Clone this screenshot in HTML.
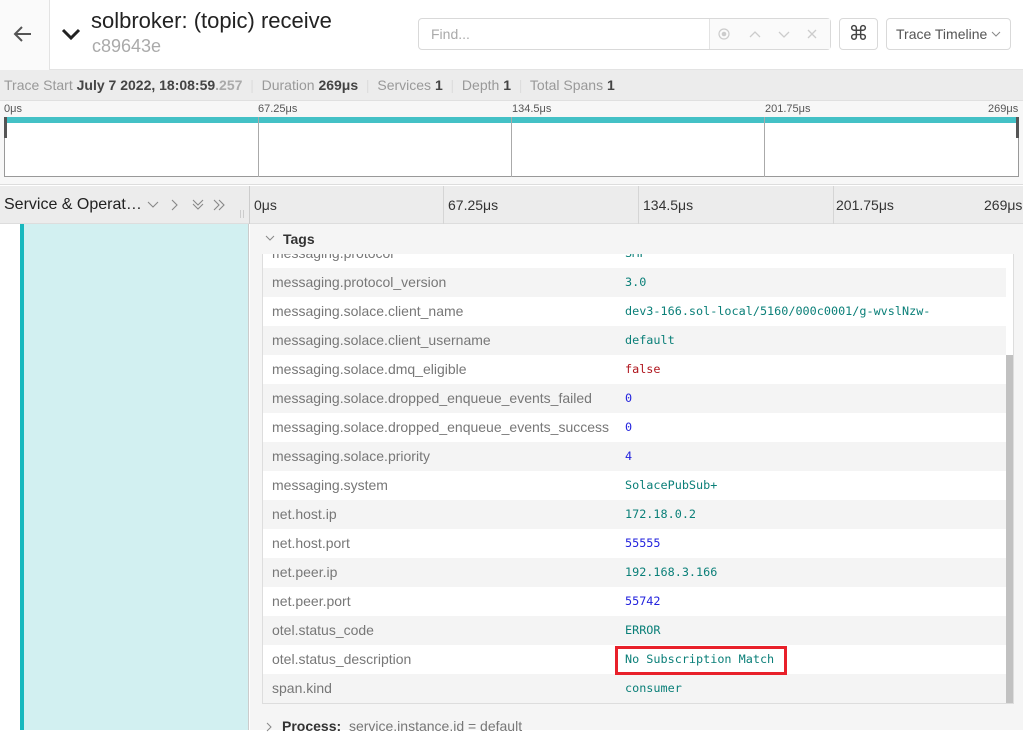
<!DOCTYPE html>
<html><head><meta charset="utf-8"><style>
*{box-sizing:border-box;margin:0;padding:0}
body{width:1023px;height:730px;overflow:hidden;background:#fff;font-family:"Liberation Sans",Arial,sans-serif;position:relative}
.a{position:absolute}
.mono{font-family:"DejaVu Sans Mono","Liberation Mono",monospace;font-size:11.8px}
.k{position:absolute;left:9px;font-size:14px;color:#777}
.v{position:absolute;left:362px}
.row{position:absolute;left:0;width:743px;height:29px;line-height:29px}
.g{background:#f4f4f4}.w{background:#fff}
.t{color:#0a7f78}.n{color:#2222dd}.r{color:#b0171f}
</style></head><body>
<!-- header -->
<div class="a" style="left:0;top:0;width:1023px;height:70px;border-bottom:1px solid #e3e3e3"></div>
<div class="a" style="left:0;top:0;width:50px;height:70px;border-right:1px solid #e3e3e3;background:#fafafa"></div>
<svg class="a" style="left:13px;top:25px" width="20" height="18" viewBox="0 0 20 18"><path d="M9 2L2 9l7 7M2 9h16" stroke="#555" stroke-width="2" fill="none"/></svg>
<svg class="a" style="left:61px;top:27px" width="20" height="14" viewBox="0 0 20 14"><path d="M2 3l8 8 8-8" stroke="#222" stroke-width="3" fill="none"/></svg>
<div class="a" style="left:91px;top:8px;font-size:22px;color:#222">solbroker: (topic) receive</div>
<div class="a" style="left:92px;top:36px;font-size:18px;color:#aaa">c89643e</div>
<div class="a" style="left:418px;top:18px;width:413px;height:32px;border:1px solid #d9d9d9;border-radius:4px"></div>
<div class="a" style="left:709px;top:19px;width:121px;height:30px;background:#fafafa;border-left:1px solid #e3e3e3"></div>
<div class="a" style="left:431px;top:26px;font-size:14px;color:#aaa">Find...</div>
<svg class="a" style="left:716px;top:26px" width="110" height="16" viewBox="0 0 110 16"><circle cx="8" cy="8" r="5" stroke="#ccc" fill="none" stroke-width="1.2"/><circle cx="8" cy="8" r="2.3" fill="#ccc"/><path d="M34 11l5-5 5 5M63 6l5 5 5-5M92 4l8 8M100 4l-8 8" stroke="#ccc" stroke-width="1.3" fill="none"/></svg>
<div class="a" style="left:839px;top:18px;width:39px;height:32px;border:1px solid #d9d9d9;border-radius:4px;text-align:center;line-height:30px;font-size:20px;color:#444">⌘</div>
<div class="a" style="left:886px;top:18px;width:125px;height:32px;border:1px solid #d9d9d9;border-radius:4px;line-height:30px;padding-left:9px;font-size:14px;color:#555">Trace Timeline</div>
<svg class="a" style="left:991px;top:31px" width="10" height="6" viewBox="0 0 10 6"><path d="M1 1l4 4 4-4" stroke="#888" fill="none"/></svg>
<!-- summary -->
<div class="a" style="left:0;top:70px;width:1023px;height:31px;background:#ececec;border-bottom:1px solid #e0e0e0;font-size:14px;color:#999;line-height:31px;padding-left:4px;white-space:nowrap">Trace Start <b style="color:#444">July 7 2022, 18:08:59</b><b style="color:#aaa">.257</b> <span style="color:#ddd">&nbsp;|&nbsp;</span> Duration <b style="color:#444">269μs</b> <span style="color:#ddd">&nbsp;|&nbsp;</span> Services <b style="color:#444">1</b> <span style="color:#ddd">&nbsp;|&nbsp;</span> Depth <b style="color:#444">1</b> <span style="color:#ddd">&nbsp;|&nbsp;</span> Total Spans <b style="color:#444">1</b></div>
<!-- minimap -->
<div class="a" style="left:0;top:101px;width:1023px;height:84px;background:#f7f7f7;border-bottom:1px solid #ddd"></div>
<div class="a" style="left:4px;top:103px;font-size:11px;color:#555">0μs</div>
<div class="a" style="left:258px;top:103px;font-size:11px;color:#555">67.25μs</div>
<div class="a" style="left:512px;top:103px;font-size:11px;color:#555">134.5μs</div>
<div class="a" style="left:765px;top:103px;font-size:11px;color:#555">201.75μs</div>
<div class="a" style="left:988px;top:103px;font-size:11px;color:#555">269μs</div>
<div class="a" style="left:4px;top:117px;width:1015px;height:60px;background:#fff;border:1px solid #999;border-top:none"></div>
<div class="a" style="left:4px;top:117px;width:1015px;height:6px;background:#44c1c6"></div>
<div class="a" style="left:258px;top:117px;width:1px;height:60px;background:#aaa"></div>
<div class="a" style="left:511px;top:117px;width:1px;height:60px;background:#aaa"></div>
<div class="a" style="left:764px;top:117px;width:1px;height:60px;background:#aaa"></div>
<div class="a" style="left:4px;top:117px;width:3px;height:21px;background:#555"></div>
<div class="a" style="left:1016px;top:117px;width:3px;height:21px;background:#555"></div>
<!-- column header -->
<div class="a" style="left:0;top:186px;width:1023px;height:38px;background:#ececec;border-bottom:1px solid #ddd"></div>
<div class="a" style="left:4px;top:196px;font-size:16px;color:#222">Service &amp; Operat…</div>
<svg class="a" style="left:146px;top:198px" width="85" height="14" viewBox="0 0 85 14"><path d="M2 4l5 5 5-5M26 2l5 5-5 5M47 2l5 5 5-5M47 6l5 5 5-5M68 2l5 5-5 5M73 2l5 5-5 5" stroke="#888" stroke-width="1.1" fill="none"/></svg>
<div class="a" style="left:240px;top:210px;width:4px;height:8px;border-left:1px solid #ccc;border-right:1px solid #ccc"></div>
<div class="a" style="left:249px;top:186px;width:1px;height:38px;background:#ccc"></div>
<div class="a" style="left:443px;top:186px;width:1px;height:38px;background:#d5d5d5"></div>
<div class="a" style="left:638px;top:186px;width:1px;height:38px;background:#d5d5d5"></div>
<div class="a" style="left:833px;top:186px;width:1px;height:38px;background:#d5d5d5"></div>
<div class="a" style="left:254px;top:197px;font-size:14px;color:#333">0μs</div>
<div class="a" style="left:448px;top:197px;font-size:14px;color:#333">67.25μs</div>
<div class="a" style="left:643px;top:197px;font-size:14px;color:#333">134.5μs</div>
<div class="a" style="left:836px;top:197px;font-size:14px;color:#333">201.75μs</div>
<div class="a" style="left:984px;top:197px;font-size:14px;color:#333">269μs</div>
<!-- left panel -->
<div class="a" style="left:20px;top:224px;width:4px;height:506px;background:#17b8be"></div>
<div class="a" style="left:24px;top:224px;width:225px;height:506px;background:#d2f0f1;border-right:1px solid #ccc"></div>
<!-- detail -->
<div class="a" style="left:250px;top:224px;width:773px;height:506px;background:#f5f5f5"></div>
<svg class="a" style="left:265px;top:235px" width="10" height="6" viewBox="0 0 10 6"><path d="M1 1l4 4 4-4" stroke="#888" fill="none"/></svg>
<div class="a" style="left:283px;top:231px;font-size:14px;color:#333"><b>Tags</b></div>
<div class="a" style="left:262px;top:254px;width:752px;height:450px;border:1px solid #ddd;border-top:none;overflow:hidden;background:#fff">
<div class="row w" style="top:-15px"><span class="k">messaging.protocol</span><span class="v mono t">SMF</span></div>
<div class="row g" style="top:14px"><span class="k">messaging.protocol_version</span><span class="v mono t">3.0</span></div>
<div class="row w" style="top:43px"><span class="k">messaging.solace.client_name</span><span class="v mono t">dev3-166.sol-local/5160/000c0001/g-wvslNzw-</span></div>
<div class="row g" style="top:72px"><span class="k">messaging.solace.client_username</span><span class="v mono t">default</span></div>
<div class="row w" style="top:101px"><span class="k">messaging.solace.dmq_eligible</span><span class="v mono r">false</span></div>
<div class="row g" style="top:130px"><span class="k">messaging.solace.dropped_enqueue_events_failed</span><span class="v mono n">0</span></div>
<div class="row w" style="top:159px"><span class="k">messaging.solace.dropped_enqueue_events_success</span><span class="v mono n">0</span></div>
<div class="row g" style="top:188px"><span class="k">messaging.solace.priority</span><span class="v mono n">4</span></div>
<div class="row w" style="top:217px"><span class="k">messaging.system</span><span class="v mono t">SolacePubSub+</span></div>
<div class="row g" style="top:246px"><span class="k">net.host.ip</span><span class="v mono t">172.18.0.2</span></div>
<div class="row w" style="top:275px"><span class="k">net.host.port</span><span class="v mono n">55555</span></div>
<div class="row g" style="top:304px"><span class="k">net.peer.ip</span><span class="v mono t">192.168.3.166</span></div>
<div class="row w" style="top:333px"><span class="k">net.peer.port</span><span class="v mono n">55742</span></div>
<div class="row g" style="top:362px"><span class="k">otel.status_code</span><span class="v mono t">ERROR</span></div>
<div class="row w" style="top:391px"><span class="k">otel.status_description</span><span class="v mono t">No Subscription Match</span></div>
<div class="row g" style="top:420px"><span class="k">span.kind</span><span class="v mono t">consumer</span></div>
<div class="a" style="left:743px;top:101px;width:8px;height:349px;background:#c1c1c1"></div>
</div>
<div class="a" style="left:615px;top:646px;width:172px;height:29px;border:3px solid #e8202a"></div>
<svg class="a" style="left:266px;top:722px" width="6" height="10" viewBox="0 0 6 10"><path d="M1 1l4 4-4 4" stroke="#888" fill="none"/></svg>
<div class="a" style="left:282px;top:718px;font-size:14px;color:#333;white-space:nowrap"><b>Process:</b> &nbsp;<span style="color:#777">service.instance.id = default</span></div>
</body></html>
